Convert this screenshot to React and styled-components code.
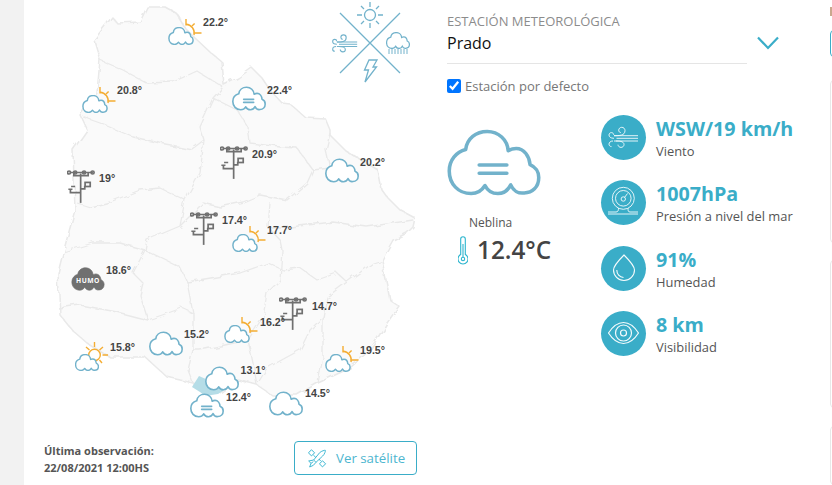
import React from "react";
import styled, { createGlobalStyle } from "styled-components";

const TEAL = "#3aadc8";
const CLOUD = "#72b2cb";
const SUN = "#f4ad33";
const POLE = "#707070";

const Global = createGlobalStyle`
  html, body { margin: 0; padding: 0; background: #fff; }
  body { font-family: "Open Sans", "Liberation Sans", sans-serif; }
`;

const Page = styled.div`
  display: flex;
  width: 832px;
  height: 485px;
  overflow: hidden;
  background: #fff;
`;
const Gutter = styled.div`
  flex: 0 0 24px;
  background: #f2f2f2;
`;
const MapColumn = styled.section`
  flex: 0 0 399px;
  display: flex;
  flex-direction: column;
`;
const Canvas = styled.div`
  position: relative;
  width: 399px;
  height: 441px;
`;
const MapSvg = styled.svg`
  position: absolute;
  left: 0;
  top: 0;
`;
const CompassSvg = styled.svg`
  position: absolute;
  left: 307px;
  top: 0;
`;
const Marker = styled.div`
  position: absolute;
  left: ${(p) => p.$x - 24}px;
  top: ${(p) => p.$y}px;
  line-height: 0;
`;
const Temp = styled.span`
  position: absolute;
  left: ${(p) => p.$x - 24}px;
  top: ${(p) => p.$y - 7}px;
  height: 14px;
  font: bold 10.7px/14px "Liberation Sans", Arial, sans-serif;
  color: #444;
  white-space: nowrap;
`;
const Footer = styled.footer`
  display: flex;
  justify-content: space-between;
  align-items: flex-start;
  padding: 0 6px 0 20px;
`;
const Observed = styled.div`
  font-size: 11px;
  font-weight: 700;
  line-height: 17px;
  color: #555;
  padding-top: 1px;
`;
const SatelliteButton = styled.button`
  display: flex;
  align-items: center;
  gap: 9px;
  width: 123px;
  height: 34px;
  padding: 0 0 0 12px;
  box-sizing: border-box;
  border: 1.3px solid ${TEAL};
  border-radius: 4px;
  background: #fff;
  font: 400 13.3px "Open Sans", sans-serif;
  color: #4db6cf;
`;
const InfoColumn = styled.section`
  flex: 0 0 383px;
  margin-left: 24px;
  padding-top: 13px;
  box-sizing: border-box;
`;
const StationRow = styled.div`
  display: flex;
  align-items: flex-start;
`;
const StationField = styled.div`
  width: 300px;
  height: 50px;
  border-bottom: 1px solid #e5e5e5;
`;
const FieldLabel = styled.div`
  font-size: 13px;
  line-height: 16px;
  color: #8c8c8c;
`;
const FieldValue = styled.div`
  font-size: 16px;
  line-height: 28px;
  color: #111;
`;
const Chevron = styled.svg`
  margin: 23px 0 0 10px;
`;
const DefaultRow = styled.label`
  display: flex;
  align-items: center;
  gap: 4px;
  height: 16px;
  margin-top: 14px;
  font-size: 13px;
  line-height: 15px;
  color: #777;
`;
const Check = styled.input`
  width: 14px;
  height: 14px;
  margin: 0;
`;
const Weather = styled.div`
  display: flex;
  margin-top: 21px;
`;
const Current = styled.div`
  flex: 0 0 154px;
  padding-top: 14px;
`;
const CloudBox = styled.svg`
  display: block;
`;
const Condition = styled.div`
  margin: 19px 0 0 22px;
  font-size: 12px;
  line-height: 16px;
  color: #555;
`;
const Reading = styled.div`
  display: flex;
  align-items: center;
  gap: 9px;
  margin: 4px 0 0 11px;
`;
const Degrees = styled.span`
  font-size: 24.3px;
  font-weight: 600;
  line-height: 30px;
  color: #444;
`;
const Stats = styled.ul`
  display: flex;
  flex-direction: column;
  gap: 20.4px;
  list-style: none;
  margin: 0;
  padding: 0;
`;
const Stat = styled.li`
  display: flex;
  gap: 10px;
  height: 45px;
`;
const Badge = styled.div`
  flex: 0 0 45px;
  height: 45px;
  border-radius: 50%;
  background: ${TEAL};
  line-height: 0;
`;
const StatText = styled.div`
  padding-top: 1px;
`;
const StatValue = styled.div`
  font-size: 19.7px;
  font-weight: 700;
  line-height: 26px;
  color: ${TEAL};
  white-space: nowrap;
`;
const StatLabel = styled.div`
  font-size: 12.9px;
  line-height: 19px;
  color: #555;
  white-space: nowrap;
`;
const SideRail = styled.aside`
  flex: 0 0 40px;
  display: flex;
  flex-direction: column;
`;
const RailMark = styled.div`
  width: 2px;
  height: 9px;
  margin-top: 7px;
  background: #c9a88e;
`;
const RailButton = styled.div`
  height: 27px;
  margin-top: 14px;
  border: 1.3px solid ${TEAL};
  border-radius: 4px;
  box-sizing: border-box;
`;
const RailCard = styled.div`
  height: ${(p) => p.$h}px;
  margin-top: ${(p) => p.$gap}px;
  border: 1px solid #e8e8e8;
  border-radius: 4px;
  box-sizing: border-box;
`;

const CLOUD_D =
  "M108 128 C112 95 140 72 175 72 C210 72 238 98 240 132 C248 127 258 125 265 125 C290 125 306 150 308 175 C325 182 335 198 335 215 C335 245 315 263 290 263 C272 266 256 256 248 238 C238 258 222 265 208 265 C192 265 176 256 168 240 C158 256 142 265 125 265 C85 265 57 235 57 195 C57 160 80 135 108 128 Z";

const CloudGlyph = ({ x = 0, y = 0, w, h, sw = 13, fog, color = CLOUD, fill = "#fff" }) => (
  <svg x={x} y={y} width={w} height={h} viewBox="50 65 292 207">
    <path d={CLOUD_D} fill={fill} stroke={color} strokeWidth={sw} strokeLinejoin="round" />
    {fog && (
      <path d="M150 176 H236 M150 202 H236" fill="none" stroke={color} strokeWidth={sw} strokeLinecap="round" />
    )}
  </svg>
);

const PlainCloud = ({ fog }) => (
  <svg width="34" height="25" viewBox="0 0 34 25">
    <CloudGlyph w={34} h={25} sw={14} fog={fog} />
  </svg>
);

const PartlyCloudy = () => (
  <svg width="34" height="26" viewBox="0 0 34 26">
    <g stroke={SUN} strokeWidth="1.4" fill="none">
      <path d="M18 0 V6.5 M26.5 14 H33.5 M24 7 L26.6 4.4" />
      <path d="M18 5.2 A8.8 8.8 0 0 1 26 16" />
    </g>
    <CloudGlyph y={8} w={26} h={18} sw={17} />
  </svg>
);

const SunnyCloud = () => (
  <svg width="34" height="30" viewBox="0 0 34 30">
    <g stroke={SUN} strokeWidth="1.4" fill="none">
      <circle cx="19.5" cy="13" r="5.8" />
      <path d="M19.5 0 V5 M33 13 H27.5 M11 5 L14.5 8 M28 5 L24.5 8 M24.5 18 L27 21" />
    </g>
    <CloudGlyph y={12} w={24} h={17} sw={17} />
  </svg>
);

const Station = () => (
  <svg width="28" height="33" viewBox="0 0 82 96">
    <g fill="none" stroke={POLE} strokeWidth="5">
      <path d="M40 10 V96" />
      <path d="M8 7 H76 M20 7 V16 H62 V7" />
      <circle cx="6" cy="7" r="4.4" />
      <circle cx="24" cy="7" r="4.4" />
      <circle cx="50" cy="7" r="4.4" />
      <circle cx="75" cy="7" r="4.4" />
      <path d="M40 55 H52 V46" />
      <rect x="53" y="36" width="15" height="12" />
      <path d="M40 66 H10 V58" />
      <path d="M4 56 H16 M12 48 H24" strokeWidth="4.5" />
    </g>
  </svg>
);

const Humo = () => (
  <svg width="34" height="24" viewBox="50 65 292 207">
    <path d={CLOUD_D} fill={POLE} stroke={POLE} strokeWidth="6" />
    <text x="196" y="203" textAnchor="middle" fontFamily="Open Sans, sans-serif" fontWeight="700" fontSize="58" fill="#fff" letterSpacing="4">
      HUMO
    </text>
  </svg>
);

const WindStrokes = () => (
  <>
    <path d="M13 20.7 H37 M15.5 23.3 H37 M13 26 H37" />
    <path d="M13 20.7 C18 20.7 24 20.7 24 15.6 C24 13.6 22.5 12.3 20.8 12.3 C19 12.3 17.7 13.7 17.7 15.2 C17.7 16.6 18.7 17.6 19.8 17.6" />
    <path d="M13 23.3 C9.5 23.3 8 21.8 8 20 C8 18.6 9 17.6 10.4 17.6 C11.7 17.6 12.7 18.6 12.7 19.8" />
    <path d="M15 26 C17.5 26 23 26 23 29.5 C23 31.2 21.7 32.4 20 32.4 C18.4 32.4 17 31.2 17 29.7" />
    <path d="M12 26 C9.5 26 8 27.4 8 29.2 C8 30.6 9.2 31.6 10.5 31.6" />
  </>
);

const Compass = () => (
  <CompassSvg width="92" height="88" viewBox="0 0 92 88">
    <g stroke={CLOUD} strokeWidth="1.3" fill="none">
      <path d="M9 13 L69 73 M69 13 L9 73" />
      <circle cx="39" cy="15" r="5.5" />
      <path d="M39 2 V7 M39 23 V28 M26 15 H31 M47 15 H52 M30 6 L33 9 M45 21 L48 24 M30 24 L33 21 M45 9 L48 6" />
      <svg x="0" y="30" width="27" height="27" viewBox="6 9 32 27">
        <WindStrokes />
      </svg>
      <svg x="55" y="32" width="24" height="17" viewBox="50 65 292 207">
        <path d={CLOUD_D} fill="#fff" stroke={CLOUD} strokeWidth="15" />
      </svg>
      <path d="M58 49 V54 M61 49 V54 M64 49 V54 M67 49 V54 M70 49 V54 M73 49 V54 M76 49 V54" strokeWidth="1" />
      <path d="M37 60 H45 L41 67 H44.5 L33 82 L36.5 70 H32.5 Z" transform="translate(1 0)" />
    </g>
  </CompassSvg>
);

const OUTLINE =
  "147,7 165,7 176,13 185,28 195,38 210,52 222,62 224,85 238,78 252,68 262,78 270,90 282,103 290,104 305,117 325,118 330,130 330,135 345,150 358,158 378,170 382,190 387,197 400,210 415,218 413,227 407,233 393,240 382,260 387,285 390,300 399,306 387,323 370,350 350,368 318,383 297,395 272,395 257,385 238,380 220,393 193,383 167,377 145,357 110,357 87,343 72,330 60,315 58,273 63,253 75,210 73,150 87,130 80,115 97,93 100,60 94,40 112,17 117,23 140,22";

const BORDERS = [
  "100,60 123,70 147,83 173,82 197,71 223,87",
  "83,117 100,123 133,137 160,143 192,149 204,140",
  "223,87 213,98 200,127 204,140 200,173 185,200 180,226 147,240 145,250",
  "77,203 90,207 110,202 140,190 160,188 185,200",
  "213,98 237,110 248,127 250,143 280,147 297,148 313,170 330,168 326,150 330,133",
  "313,170 307,183 287,200 260,195 243,202 220,207 203,203 180,226",
  "270,203 268,227 280,240 282,250 280,280 267,293 263,317 248,340 253,363 257,385",
  "268,227 290,227 333,222 367,227 413,220",
  "283,270 300,268 317,280 337,273 347,282 373,263 382,260",
  "347,282 327,297 323,317 323,357 318,383",
  "323,317 310,330 300,350 267,368 258,383",
  "248,340 225,345 200,350 193,350 193,313 182,308 148,320 117,312 80,305 58,308",
  "148,320 140,295 143,283 133,273 145,250 180,267 187,282 193,313",
  "187,282 240,273 268,263 283,270",
  "63,252 93,243 120,243 145,250",
  "193,350 188,370 193,383",
];

const MapShape = () => (
  <MapSvg width="399" height="441" viewBox="24 0 399 441">
    <defs>
      <filter id="rough" x="-5%" y="-5%" width="110%" height="110%">
        <feTurbulence type="fractalNoise" baseFrequency="0.09" numOctaves="3" seed="4" />
        <feDisplacementMap in="SourceGraphic" scale="6" />
      </filter>
    </defs>
    <g filter="url(#rough)">
      <polygon points={OUTLINE} fill="#fafafa" stroke="#e9e9e9" strokeWidth="1.5" strokeLinejoin="round" />
      {BORDERS.map((b) => (
        <polyline key={b} points={b} fill="none" stroke="#e9e9e9" strokeWidth="1.3" strokeLinejoin="round" />
      ))}
    </g>
    <polygon points="199,376 192,387 200,392 205,396 218,394 226,389 208,380" fill="#b5dde7" />
  </MapSvg>
);

const MARKERS = [
  { x: 168, y: 19, k: "partly" },
  { x: 82, y: 87, k: "partly" },
  { x: 232, y: 226, k: "partly" },
  { x: 224, y: 317, k: "partly" },
  { x: 325, y: 346, k: "partly" },
  { x: 75, y: 342, k: "sunny" },
  { x: 325, y: 158, k: "plain" },
  { x: 149, y: 331, k: "plain" },
  { x: 205, y: 366, k: "plain" },
  { x: 269, y: 391, k: "plain" },
  { x: 232, y: 86, k: "fog" },
  { x: 190, y: 393, k: "fog" },
  { x: 67, y: 170, k: "station" },
  { x: 220, y: 146, k: "station" },
  { x: 190, y: 212, k: "station" },
  { x: 279, y: 297, k: "station" },
  { x: 71, y: 267, k: "humo" },
];

const TEMPS = [
  ["22.2°", 203, 22],
  ["20.8°", 117, 90],
  ["22.4°", 267, 90],
  ["20.9°", 252, 154],
  ["20.2°", 360, 162],
  ["19°", 99, 178],
  ["17.4°", 222, 220],
  ["17.7°", 267, 230],
  ["18.6°", 106, 270],
  ["14.7°", 312, 306],
  ["16.2°", 260, 322],
  ["15.2°", 184, 334],
  ["15.8°", 110, 347],
  ["19.5°", 360, 350],
  ["13.1°", 240.5, 370],
  ["14.5°", 305, 393],
  ["12.4°", 226, 397],
];

const glyphs = {
  partly: <PartlyCloudy />,
  sunny: <SunnyCloud />,
  plain: <PlainCloud />,
  fog: <PlainCloud fog />,
  station: <Station />,
  humo: <Humo />,
};

const BadgeSvg = ({ children }) => (
  <svg width="45" height="45" viewBox="0 0 45 45" fill="none" stroke="#fff" strokeWidth="0.9" opacity="0.95">
    {children}
  </svg>
);

const SatelliteIcon = () => (
  <svg width="20" height="20" viewBox="0 0 60 60" fill="none" stroke="#35b4d0" strokeWidth="2.8" strokeLinejoin="round">
    <rect x="7" y="8" width="13" height="13" transform="rotate(45 13.5 14.5)" />
    <rect x="40" y="41" width="13" height="13" transform="rotate(45 46.5 47.5)" />
    <path d="M20 36 L38 14 C43 9 54 6 55 7 C56 8 53 19 47 24 L27 43 Z" />
    <path d="M19 21 L27 29 M36 33 L41 39" />
    <path d="M20 36 L5 39 L12 46 L8 57 L19 52 L27 43" />
    <path d="M12 46 L19 41" />
  </svg>
);

const stats = [
  {
    value: "WSW/19 km/h",
    label: "Viento",
    icon: <WindStrokes />,
  },
  {
    value: "1007hPa",
    label: "Presión a nivel del mar",
    icon: (
      <>
        <circle cx="22.3" cy="18.3" r="11" />
        <circle cx="22.3" cy="18.3" r="7.8" />
        <circle cx="22.3" cy="19" r="2.2" />
        <path d="M23.5 17.5 L26.5 13.5" />
        <path d="M7 32 H15 C17 32 17.5 30.5 17.5 28 M37 32 H29 C27 32 27 30.5 27 28 M7 34 H37" />
      </>
    ),
  },
  {
    value: "91%",
    label: "Humedad",
    icon: (
      <>
        <path d="M23 9 C23 9 12.5 19.5 12.5 24 A10.5 10.5 0 0 0 33.5 24 C33.5 19.5 23 9 23 9 Z" strokeWidth="1.1" />
        <path d="M15.8 24 C15.8 28 18.5 31.3 22.5 31.5" strokeWidth="1.1" />
      </>
    ),
  },
  {
    value: "8 km",
    label: "Visibilidad",
    icon: (
      <>
        <path d="M7.5 22 C12 15 17 11.5 22.5 11.5 C28 11.5 33 15 37.5 22 C33 29 28 32.5 22.5 32.5 C17 32.5 12 29 7.5 22 Z" strokeWidth="1.2" />
        <circle cx="22.5" cy="22" r="8" strokeWidth="1.2" />
        <circle cx="22.5" cy="22" r="3" strokeWidth="1.2" />
      </>
    ),
  },
];

export default function App() {
  return (
    <>
      <Global />
      <Page>
        <Gutter />
        <MapColumn>
          <Canvas>
            <MapShape />
            <Compass />
            {MARKERS.map((m, i) => (
              <Marker key={i} $x={m.x} $y={m.y}>
                {glyphs[m.k]}
              </Marker>
            ))}
            {TEMPS.map(([t, x, y]) => (
              <Temp key={t} $x={x} $y={y}>
                {t}
              </Temp>
            ))}
          </Canvas>
          <Footer>
            <Observed>
              Última observación:
              <br />
              22/08/2021 12:00HS
            </Observed>
            <SatelliteButton>
              <SatelliteIcon />
              Ver satélite
            </SatelliteButton>
          </Footer>
        </MapColumn>
        <InfoColumn>
          <StationRow>
            <StationField>
              <FieldLabel>ESTACIÓN METEOROLÓGICA</FieldLabel>
              <FieldValue>Prado</FieldValue>
            </StationField>
            <Chevron width="22" height="14" viewBox="0 0 22 14" fill="none" stroke={TEAL} strokeWidth="2.2">
              <path d="M1 1.5 L11 12 L21 1.5" />
            </Chevron>
          </StationRow>
          <DefaultRow>
            <Check type="checkbox" defaultChecked />
            Estación por defecto
          </DefaultRow>
          <Weather>
            <Current>
              <CloudBox width="94" height="67" viewBox="0 0 94 67">
                <CloudGlyph w={94} h={67} sw={11} fog />
              </CloudBox>
              <Condition>Neblina</Condition>
              <Reading>
                <svg width="10" height="29" viewBox="0 0 10 29" fill="none" stroke="#2cb5ce" strokeWidth="1.1">
                  <path d="M2.7 18.5 V3 A2.3 2.3 0 0 1 7.3 3 V18.5 A5 5 0 1 1 2.7 18.5 Z" />
                  <circle cx="5" cy="23" r="1.7" />
                  <path d="M5 8 V21" />
                </svg>
                <Degrees>12.4°C</Degrees>
              </Reading>
            </Current>
            <Stats>
              {stats.map((s) => (
                <Stat key={s.label}>
                  <Badge>
                    <BadgeSvg>{s.icon}</BadgeSvg>
                  </Badge>
                  <StatText>
                    <StatValue>{s.value}</StatValue>
                    <StatLabel>{s.label}</StatLabel>
                  </StatText>
                </Stat>
              ))}
            </Stats>
          </Weather>
        </InfoColumn>
        <SideRail>
          <RailMark />
          <RailButton />
          <RailCard $h={165} $gap={23} />
          <RailCard $h={150} $gap={17} />
          <RailCard $h={60} $gap={18} />
        </SideRail>
      </Page>
    </>
  );
}
